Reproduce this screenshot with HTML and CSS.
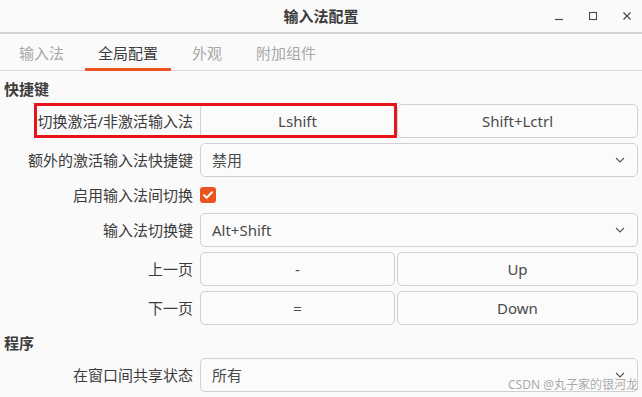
FILE: index.html
```html
<!DOCTYPE html>
<html lang="zh-CN">
<head>
    <meta charset="UTF-8">
    <title>输入法配置</title>
    <link rel="stylesheet" href="styles.css">
</head>
<body>
    <div class="titlebar">
        <span class="title">输入法配置</span>
        <div class="win-btns">
            <span class="win-btn"><svg width="10" height="10" viewBox="0 0 10 10"><path d="M1 8.5h8" stroke="#4a4a4a" stroke-width="1.2"/></svg></span>
            <span class="win-btn"><svg width="10" height="10" viewBox="0 0 10 10"><rect x="1.5" y="1.5" width="7" height="7" fill="none" stroke="#4a4a4a" stroke-width="1.1"/></svg></span>
            <span class="win-btn"><svg width="10" height="10" viewBox="0 0 10 10"><path d="M1.5 1.5l7 7M8.5 1.5l-7 7" stroke="#4a4a4a" stroke-width="1.2"/></svg></span>
        </div>
    </div>

    <div class="tabs">
        <span class="tab">输入法</span>
        <span class="tab active">全局配置</span>
        <span class="tab">外观</span>
        <span class="tab">附加组件</span>
    </div>

    <div class="settings">
        <div class="group">快捷键</div>

        <div class="label">切换激活/非激活输入法</div>
        <div class="pair">
            <div class="btn">Lshift</div>
            <div class="btn">Shift+Lctrl</div>
        </div>

        <div class="label">额外的激活输入法快捷键</div>
        <div class="combo"><span>禁用</span><svg width="10" height="6" viewBox="0 0 10 6"><path d="M1 1l4 4 4-4" fill="none" stroke="#555" stroke-width="1.1"/></svg></div>

        <div class="label">启用输入法间切换</div>
        <div class="check-row">
            <svg width="16" height="16" viewBox="0 0 16 16"><rect width="16" height="16" rx="3" fill="#e95420"/><path d="M4 8.2l2.7 2.6L12 5.3" fill="none" stroke="#fff" stroke-width="2" stroke-linecap="round" stroke-linejoin="round"/></svg>
        </div>

        <div class="label">输入法切换键</div>
        <div class="combo"><span>Alt+Shift</span><svg width="10" height="6" viewBox="0 0 10 6"><path d="M1 1l4 4 4-4" fill="none" stroke="#555" stroke-width="1.1"/></svg></div>

        <div class="label">上一页</div>
        <div class="pair">
            <div class="btn">-</div>
            <div class="btn">Up</div>
        </div>

        <div class="label">下一页</div>
        <div class="pair">
            <div class="btn">=</div>
            <div class="btn">Down</div>
        </div>

        <div class="group second">程序</div>

        <div class="label">在窗口间共享状态</div>
        <div class="combo"><span>所有</span><svg width="10" height="6" viewBox="0 0 10 6"><path d="M1 1l4 4 4-4" fill="none" stroke="#555" stroke-width="1.1"/></svg></div>
    </div>

    <div class="mark-box"></div>
    <div class="watermark">CSDN @丸子家的银河龙</div>
</body>
</html>
```

FILE: styles.css
```css
body {
    margin: 0;
    width: 642px;
    height: 397px;
    overflow: hidden;
    position: relative;
    background: #fafafa;
    font-family: "Noto Sans", "Noto Sans CJK SC", sans-serif;
    font-size: 15px;
    line-height: 20px;
    color: #3c3c3c;
}
.titlebar {
    height: 32px;
    border-bottom: 2px solid #d3d3d3;
    display: grid;
    grid-template-columns: 1fr auto 1fr;
    align-items: center;
}
.title {
    grid-column: 2;
    font-weight: bold;
}
.win-btns {
    justify-self: end;
    display: flex;
    gap: 4px;
}
.win-btn {
    width: 30px;
    height: 32px;
    display: flex;
    align-items: center;
    justify-content: center;
}
.tabs {
    height: 36px;
    border-bottom: 1px solid #dadada;
    display: flex;
    gap: 8px;
    padding-left: 6px;
}
.tab {
    box-sizing: border-box;
    height: 37px;
    margin-bottom: -1px;
    padding: 0 13px;
    display: flex;
    align-items: center;
    color: #a8a8a8;
}
.tab.active {
    color: #3c3c3c;
    border-bottom: 3px solid #e95420;
    padding-top: 3px;
}
.settings {
    display: grid;
    grid-template-columns: 189px 438px;
    column-gap: 7px;
    row-gap: 5px;
    padding: 8px 4px 0;
    align-items: center;
}
.group {
    grid-column: 1 / -1;
    font-weight: bold;
}
.group.second {
    margin-top: 3px;
}
.label {
    text-align: right;
}
.pair {
    display: grid;
    grid-template-columns: 195px 1fr;
    gap: 2px;
}
.btn, .combo {
    box-sizing: border-box;
    height: 34px;
    border: 1px solid #d0d0d0;
    border-radius: 5px;
    background: #fbfbfb;
    display: flex;
    align-items: center;
    color: #4a4a4a;
}
.btn {
    justify-content: center;
}
.combo {
    justify-content: space-between;
    padding: 0 12px 0 11px;
}
.check-row {
    height: 26px;
    display: flex;
    align-items: center;
}
.mark-box {
    position: absolute;
    left: 34px;
    top: 103px;
    width: 363px;
    height: 35px;
    box-sizing: border-box;
    border: 3px solid #e8141c;
}
.watermark {
    position: absolute;
    right: 4px;
    bottom: 5px;
    font-size: 12px;
    line-height: 14px;
    color: rgba(110, 110, 110, 0.6);
}
```
